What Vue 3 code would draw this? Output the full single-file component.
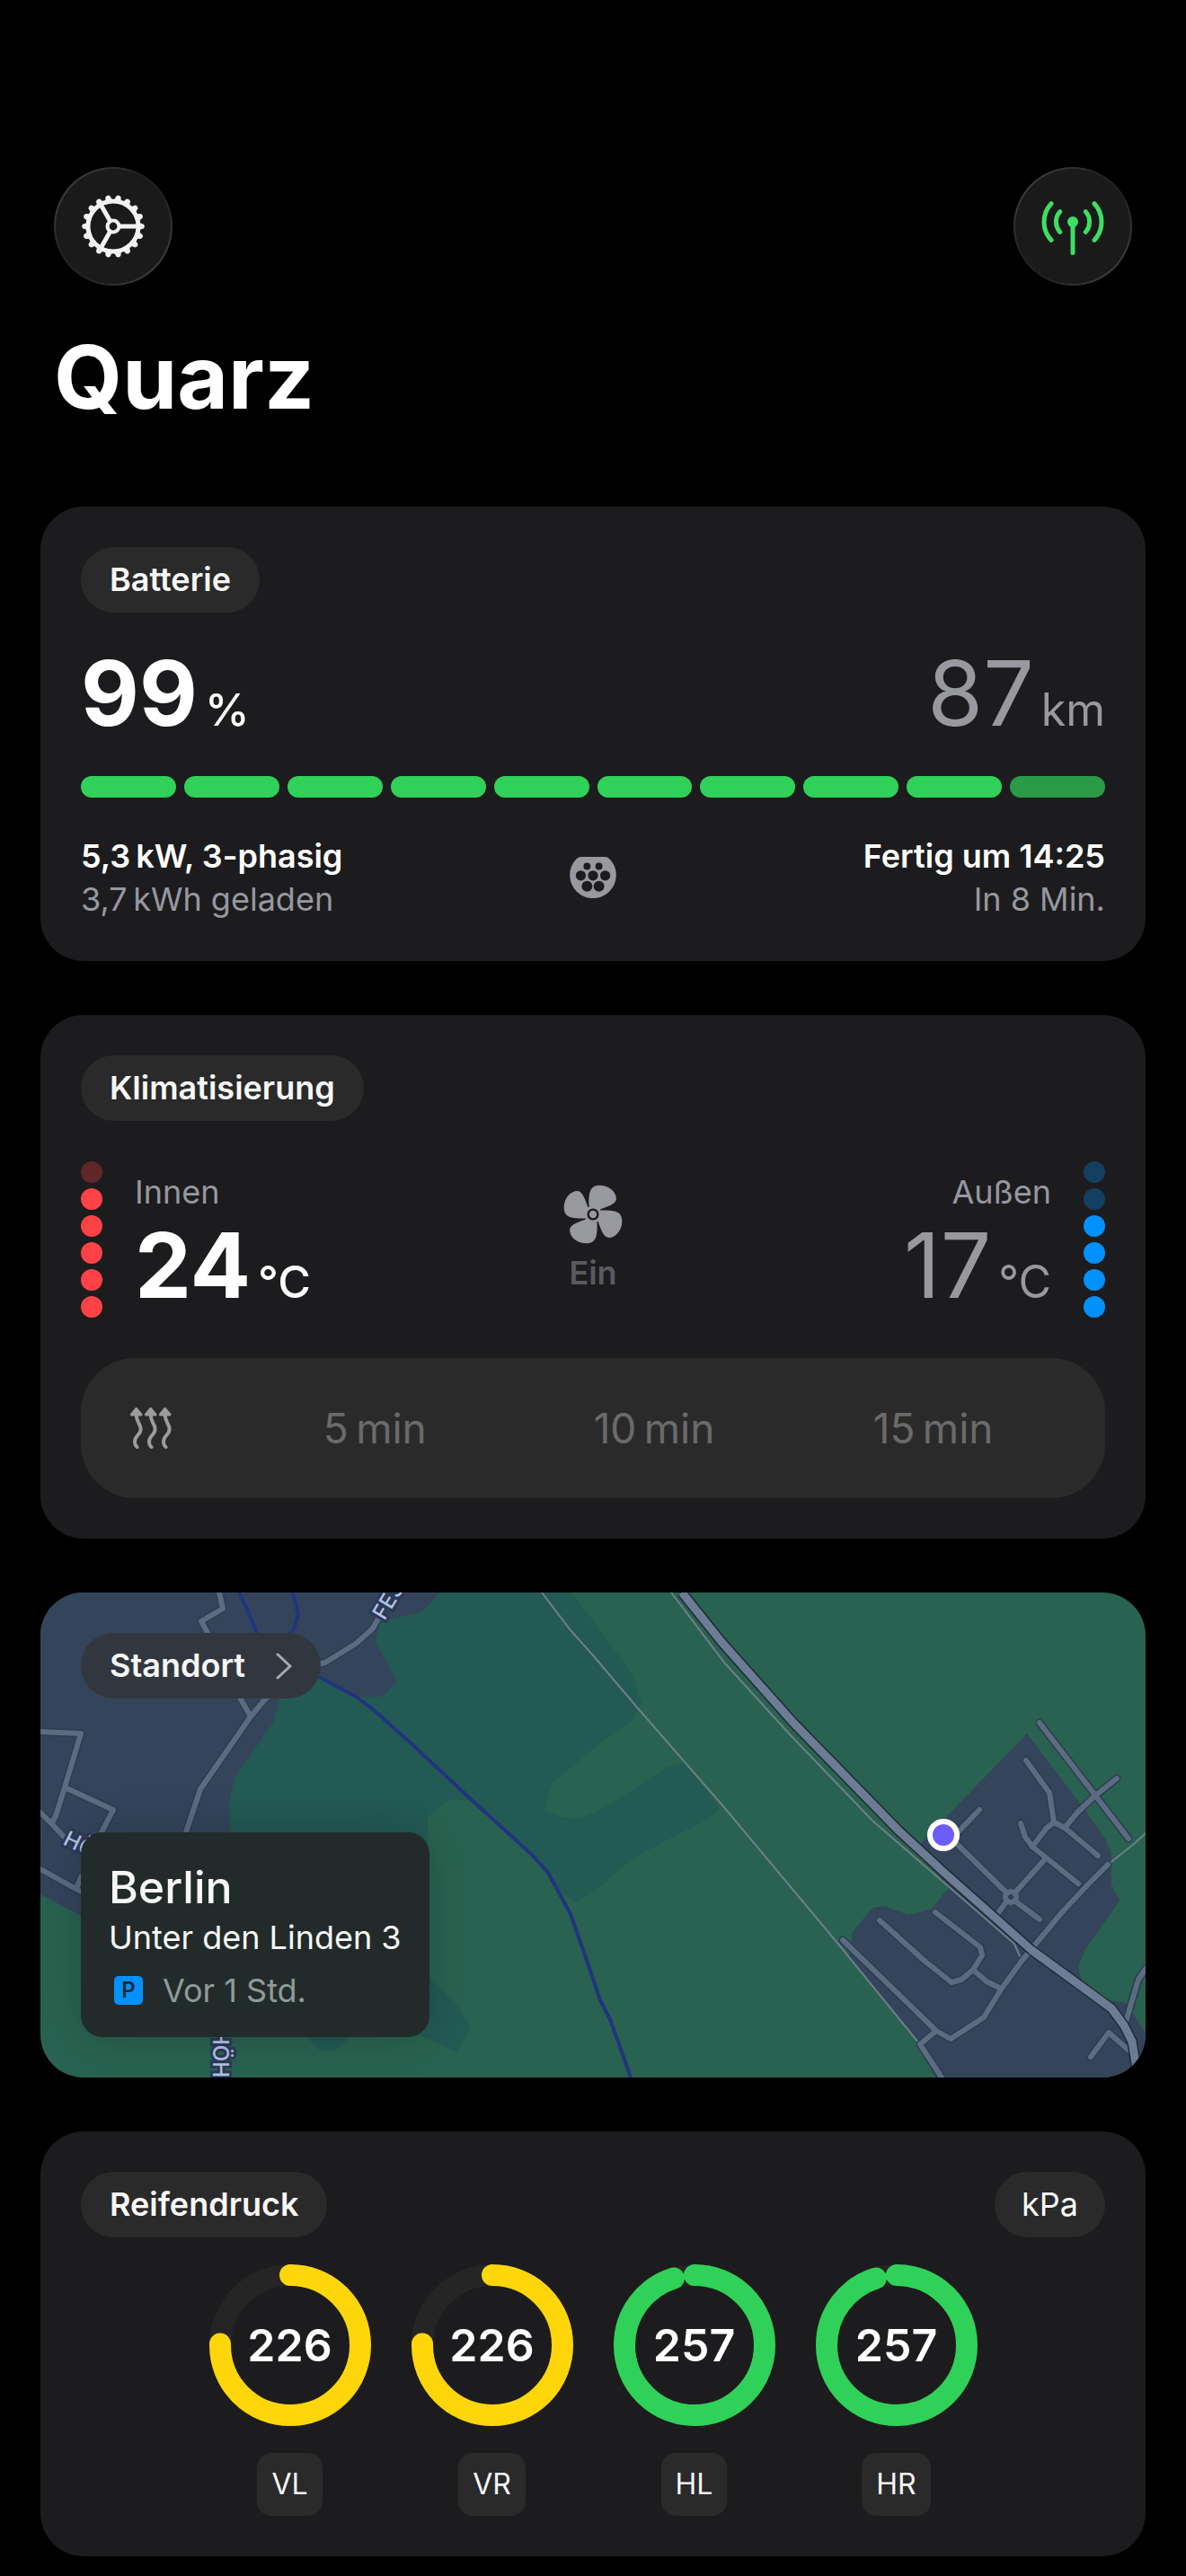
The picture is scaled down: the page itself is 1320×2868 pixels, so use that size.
<template>
  <div class="app">
    <header class="top">
      <button type="button" class="round" aria-label="Einstellungen">
        <svg class="gear" viewBox="-36 -36 72 72">
          <path v-for="n in 18" :key="n" class="tooth" d="M26 -4.5L29.5 -3.8L33.6 -2.6Q36.2 0 33.6 2.6L29.5 3.8L26 4.5Z"
            :transform="`rotate(${n * 20})`" />
          <circle r="28" class="line rim" />
          <path v-for="a in [0, 120, 240]" :key="a" class="line" d="M7 0H27" :transform="`rotate(${a})`" />
          <circle r="6.4" class="line hub" />
        </svg>
      </button>
      <button type="button" class="round" aria-label="Verbindung">
        <svg class="antenna" viewBox="28 28 74 74">
          <circle cx="65" cy="60" r="6" />
          <path d="M65 60V94.5M79.3 48.7A17 17 0 0 1 79.3 71.3M89 39.7A29.8 29.8 0 0 1 89 80.3M50.7 48.7A17 17 0 0 0 50.7 71.3M41 39.7A29.8 29.8 0 0 0 41 80.3" />
        </svg>
      </button>
    </header>
    <h1>Quarz</h1>

    <main>
      <!-- Batterie -->
      <section class="card">
        <h2 class="pill">Batterie</h2>
        <div class="row values">
          <p class="value">99<span class="unit">%</span></p>
          <p class="value dim">87<span class="unit">km</span></p>
        </div>
        <div class="bars">
          <span v-for="n in 10" :key="n" :class="{ charging: n === 10 }"></span>
        </div>
        <div class="row">
          <div class="info">
            <p class="strong">5,3&#8201;kW, 3-phasig</p>
            <p class="dim">3,7&#8201;kWh geladen</p>
          </div>
          <svg class="plug" viewBox="102 47 156 139">
            <path d="M138 47H222Q230 47 237 55A78 78 0 1 1 123 55Q130 47 138 47Z" />
            <circle v-for="(h, i) in plugHoles" :key="i" :cx="h[0]" :cy="h[1]" :r="h[2]" />
          </svg>
          <div class="info end">
            <p class="strong">Fertig um 14:25</p>
            <p class="dim">In 8 Min.</p>
          </div>
        </div>
      </section>

      <!-- Klima -->
      <section class="card">
        <h2 class="pill">Klimatisierung</h2>
        <div class="row climate">
          <div class="side">
            <div class="dots red">
              <i v-for="n in 6" :key="n" :class="{ off: n < 2 }"></i>
            </div>
            <div class="info">
              <p class="dim">Innen</p>
              <p class="value">24<span class="unit">°C</span></p>
            </div>
          </div>
          <div class="fan">
            <svg viewBox="-98 -98 196 196">
              <path v-for="a in [0, 90, 180, 270]" :key="a" :transform="`rotate(${a})`"
                d="M0 0L-13 -26C-16 -75 -8 -96 22 -96C54 -96 77 -74 77 -52C77 -38 60 -29 27 -18Z" />
              <circle r="28" />
              <circle r="16" class="gap" />
            </svg>
            <p>Ein</p>
          </div>
          <div class="side">
            <div class="info end">
              <p class="dim">Außen</p>
              <p class="value dim">17<span class="unit">°C</span></p>
            </div>
            <div class="dots blue">
              <i v-for="n in 6" :key="n" :class="{ off: n < 3 }"></i>
            </div>
          </div>
        </div>
        <div class="timer">
          <svg class="heat" viewBox="0 0 46 46">
            <g v-for="x in [0, 16, 32]" :key="x" :transform="`translate(${x} 0)`">
              <path class="head" d="M6.7 1.5L12 8H1.4Z" />
              <path d="M6.7 8C6.7 17 11.6 18 11.6 24C11.6 31 5 31 5 38Q5 42 7.5 44" />
            </g>
          </svg>
          <button v-for="m in [5, 10, 15]" :key="m" type="button" disabled>{{ m }}&#8201;min</button>
        </div>
      </section>

      <!-- Standort -->
      <section class="card map">
        <svg class="canvas" viewBox="0 0 1230 540" preserveAspectRatio="xMidYMid slice">
          <rect width="1230" height="540" fill="#296250" />
          <g fill="#235a54">
            <path d="M200 0H590L615 31L659 92L669 123L659 142L615 174L569 213L561 242L582 251L601 251L615 246L640 232L697 195L717 189L756 240L745 251L659 296L615 334L597 344L582 336L565 312L546 291L481 232L456 230L431 250V300H200Z" />
            <path d="M431 427L464 460L479 484L464 512L422 493L400 460Z" />
            <path d="M296 495L311 510H327L346 495V480H296Z" />
          </g>
          <g fill="#34445b">
            <path d="M0 0H445L424 22L378 32L373 55L397 100L380 116H351L311 95L275 90L266 119L259 145L216 206L210 234V262L200 300L45 360L0 336Z" />
            <path d="M1098 157L1158 236L1185 274L1192 291V325L1201 343L1162 399L1155 417L1161 438L1181 452L1209 457L1230 491V540H996L978 502L899 406L904 378L926 351L939 349L966 359L992 352L1010 330L979 280Z" />
          </g>
          <path class="river" d="M221 0L232 23L241 45L260 80L312 95L351 116L370 130L418 173L481 232L546 291L565 312L590 358L603 395L615 430L623 454L634 475L657 540M281 0L287 24L282 41L262 60" />
          <path class="track" d="M558 0L590 42L615 70L665 129L760 238L891 395L978 502M702 0L762 79L834 158L926 254L1008 325L1084 391L1091 407M1188 303L1217 280L1230 268" />
          <path class="street casing" :d="streets" />
          <path class="street" :d="streets" />
          <circle class="street" cx="1080" cy="339" r="6" />
          <path class="main casing" :d="mainRoad" />
          <path class="main" :d="mainRoad" />
          <text transform="translate(383 32) rotate(-59)">FES</text>
          <text transform="translate(24 280) rotate(26)">HÖ</text>
          <text transform="translate(192 486) rotate(90)">HÖHE</text>
          <circle class="pin" cx="1005" cy="270" r="15" />
        </svg>
        <div class="overlay">
          <a href="#standort" class="pill">
            Standort
            <svg class="chevron" viewBox="0 0 18 30"><path d="M2 2L16 15L2 28" /></svg>
          </a>
          <div class="address">
            <h3>Berlin</h3>
            <p class="place">Unter den Linden 3</p>
            <p class="parked"><span class="p">P</span>Vor 1 Std.</p>
          </div>
        </div>
      </section>

      <!-- Reifen -->
      <section class="card">
        <div class="row">
          <h2 class="pill">Reifendruck</h2>
          <button type="button" class="pill light">kPa</button>
        </div>
        <div class="tires">
          <div v-for="t in tires" :key="t.name" class="tire">
            <div class="ring">
              <svg viewBox="0 0 180 180">
                <circle cx="90" cy="90" r="78" class="bg" />
                <circle cx="90" cy="90" r="78" pathLength="1000" :stroke="t.color"
                  :stroke-dasharray="`${t.fill} 1000`" transform="rotate(-90 90 90)" />
              </svg>
              <strong>{{ t.pressure }}</strong>
            </div>
            <span class="name">{{ t.name }}</span>
          </div>
        </div>
      </section>
    </main>
  </div>
</template>

<script setup>
import { ref } from 'vue'

const tires = ref([
  { name: 'VL', pressure: 226, fill: 753, color: '#ffd60a' },
  { name: 'VR', pressure: 226, fill: 753, color: '#ffd60a' },
  { name: 'HL', pressure: 257, fill: 952, color: '#30d158' },
  { name: 'HR', pressure: 257, fill: 952, color: '#30d158' }
])

// x, y, radius
const plugHoles = [
  [160, 79, 12], [200, 79, 12],
  [139, 110, 17], [180, 110, 17], [221, 110, 17],
  [160, 146, 18], [200, 146, 18]
]

const mainRoad = 'M714 0L758 55L838 145L918 227L954 264L1006 312L1103 398L1192 463L1206 482L1215 500L1220 530'

const streets = [
  // links
  'M199 0L203 18L179 32L186 45L223 119L234 138',
  'M376 29L370 40L351 57L317 78L290 85L250 119L234 138L178 219L162 267',
  'M0 155L45 157L27 217L17 249L13 256M27 217L81 242L68 267',
  'M0 245L13 258L30 276M0 308L45 333M41 327L46 315',
  // rechts
  'M893 387L997 488L1013 497L1050 473L1069 442L1093 409L1137 356L1166 325L1188 303',
  'M997 488L979 503L1003 540',
  'M934 365L985 411L1014 434L1025 431L1038 420L1048 404L1046 395L996 356',
  'M1038 420L1053 433L1069 441',
  'M1021 281L1076 335M1084 343L1112 364M1045 242L1021 267',
  'M1065 358L1076 343M1084 335L1118 297',
  'M1091 257L1096 272L1104 283L1155 324',
  'M1104 283L1120 262L1128 256L1123 223L1097 187',
  'M1128 256L1140 262L1177 293M1140 262L1154 245L1173 227L1198 207',
  'M1112 145L1211 274',
  'M1230 419L1222 431L1208 478M1169 517L1189 490L1215 513'
].join('')
</script>

<style>
body {
  background: #000;
}
</style>

<style scoped>
.app {
  padding: 186px 45px 22px;
  font-family: Inter, "Liberation Sans", sans-serif;
  font-size: 36px;
  line-height: 48px;
  color: #fff;
}

h1, h2, h3, p {
  margin: 0;
}

button {
  border: 0;
  font: inherit;
  color: inherit;
}

svg {
  display: block;
}

.top {
  display: flex;
  justify-content: space-between;
  padding: 0 15px;
}

.round {
  display: flex;
  align-items: center;
  justify-content: center;
  width: 132px;
  height: 132px;
  padding: 0;
  border: 2px solid transparent;
  border-radius: 50%;
  background: linear-gradient(#1a1a1a, #1a1a1a) padding-box,
    linear-gradient(135deg, #4a4a4a, #222 40%, #222 60%, #4a4a4a) border-box;
}

.gear {
  width: 72px;
  height: 72px;
}

.tooth {
  fill: #f2f2f2;
}

.line {
  fill: none;
  stroke: #f2f2f2;
  stroke-width: 5;
}

.hub {
  stroke-width: 4;
}

.antenna {
  width: 74px;
  height: 74px;
  fill: #3ddf63;
}

.antenna path {
  fill: none;
  stroke: #3ddf63;
  stroke-width: 5;
  stroke-linecap: round;
}

h1 {
  margin: 44px 0 86px;
  padding: 0 15px;
  font-size: 98px;
  line-height: 116px;
  font-weight: 700;
}

main {
  display: flex;
  flex-direction: column;
  gap: 60px;
}

.card {
  padding: 45px;
  border-radius: 48px;
  background: #1c1c1e;
}

.row {
  display: flex;
  justify-content: space-between;
  align-items: center;
}

.pill {
  display: flex;
  align-items: center;
  width: fit-content;
  padding: 15px 32px;
  border-radius: 37px;
  background: #2a2a2b;
  color: #f7f7f7;
  font-size: 36px;
  font-weight: 600;
  line-height: 43px;
}

.light {
  padding: 15px 30px;
  font-weight: 400;
}

.values {
  margin: 32px 0 34px;
}

.value {
  display: flex;
  align-items: baseline;
  gap: 8px;
  font-size: 100px;
  font-weight: 700;
  line-height: 116px;
}

.unit {
  font-size: 50px;
  font-weight: 500;
  line-height: 60px;
}

.dim {
  color: #98989f;
}

.value.dim, .value.dim .unit {
  font-weight: 400;
}

.bars {
  display: flex;
  gap: 9px;
  margin-bottom: 41px;
}

.bars span {
  flex: 1;
  height: 24px;
  border-radius: 12px;
  background: #30d158;
}

.bars .charging {
  background: #2a9a47;
}

.strong {
  font-weight: 600;
}

.info {
  flex: 1;
}

.end {
  text-align: right;
}

.end .value {
  justify-content: flex-end;
}

.plug {
  width: 52px;
  height: 46px;
  fill: #98989f;
}

.plug circle {
  fill: #1c1c1e;
}

.climate {
  margin: 45px 0;
}

.side {
  display: flex;
  flex: 1;
  align-items: flex-end;
  gap: 36px;
}

.dots {
  display: flex;
  flex-direction: column;
  gap: 6px;
}

.dots i {
  width: 24px;
  height: 24px;
  border-radius: 50%;
}

.red i {
  background: #ff4245;
}

.blue i {
  background: #0091ff;
}

.dots .off {
  opacity: 0.3;
}

.fan {
  display: flex;
  flex-direction: column;
  align-items: center;
  gap: 8px;
  color: #5a5a5e;
  font-weight: 600;
}

.fan svg {
  width: 66px;
  height: 66px;
  fill: #98989f;
}

.fan .gap {
  stroke: #1c1c1e;
  stroke-width: 7;
}

.timer {
  display: flex;
  align-items: center;
  padding: 48px 36px 48px 55px;
  border-radius: 60px;
  background: #2a2a2a;
}

.heat {
  width: 46px;
  height: 46px;
  margin-right: 71px;
  fill: none;
  stroke: #9c9c9c;
  stroke-width: 4;
  stroke-linecap: round;
  stroke-linejoin: round;
}

.heat .head {
  fill: #9c9c9c;
  stroke-width: 3;
}

.timer button {
  flex: 1;
  padding: 0;
  background: none;
  color: #6a6a6a;
  font-size: 46px;
  line-height: 60px;
}

.map {
  position: relative;
  padding: 0;
  overflow: hidden;
}

.canvas {
  position: absolute;
  width: 100%;
  height: 100%;
}

.river {
  fill: none;
  stroke: #21347e;
  stroke-width: 4;
}

.track {
  fill: none;
  stroke: #6c7f88;
  stroke-width: 2;
}

.street {
  fill: none;
  stroke: #5b6b80;
  stroke-width: 6;
  stroke-linecap: round;
  stroke-linejoin: round;
}

.street.casing {
  stroke: #2d3d4f;
  stroke-width: 9;
}

.main {
  fill: none;
  stroke: #6c7c95;
  stroke-width: 9;
  stroke-linejoin: round;
}

.main.casing {
  stroke: #1f2a33;
  stroke-width: 12;
}

.canvas text {
  fill: #b4c2e0;
  stroke: #2b3a58;
  stroke-width: 6;
  paint-order: stroke;
  font-size: 24px;
  font-weight: 500;
}

.pin {
  fill: #6b5cff;
  stroke: #fff;
  stroke-width: 6;
}

.overlay {
  position: relative;
  display: flex;
  flex-direction: column;
  align-items: flex-start;
  gap: 149px;
  padding: 45px;
}

.map .pill {
  gap: 34px;
  background: #32373f;
  text-decoration: none;
}

.chevron {
  width: 18px;
  height: 30px;
  fill: none;
  stroke: #a5abb5;
  stroke-width: 3;
  stroke-linecap: round;
  stroke-linejoin: round;
}

.address {
  padding: 31px 31px 28px;
  border-radius: 24px;
  background: #222b2a;
  box-shadow: 0 0 50px rgba(0, 0, 0, 0.2);
  color: #f7f7f7;
}

h3 {
  font-size: 50px;
  font-weight: 500;
  line-height: 60px;
}

.place {
  line-height: 52px;
}

.parked {
  display: flex;
  align-items: center;
  gap: 22px;
  margin-top: 9px;
  padding-left: 6px;
  color: #8f9b99;
}

.p {
  width: 32px;
  height: 32px;
  border-radius: 5px;
  background: #0091ff;
  color: #1c2b30;
  font-size: 24px;
  font-weight: 600;
  line-height: 32px;
  text-align: center;
}

.tires {
  display: flex;
  justify-content: center;
  gap: 45px;
  margin-top: 30px;
}

.tire {
  display: flex;
  flex-direction: column;
  align-items: center;
  gap: 30px;
}

.ring {
  display: grid;
  place-items: center;
}

.ring > * {
  grid-area: 1 / 1;
}

.ring svg {
  width: 180px;
  height: 180px;
  fill: none;
  stroke-width: 24;
  stroke-linecap: round;
}

.ring .bg {
  stroke: #252525;
}

.ring strong {
  font-size: 50px;
  font-weight: 600;
}

.name {
  padding: 11px 16px;
  border-radius: 16px;
  background: #2a2a2b;
  color: #f7f7f7;
  font-size: 32px;
}
</style>
